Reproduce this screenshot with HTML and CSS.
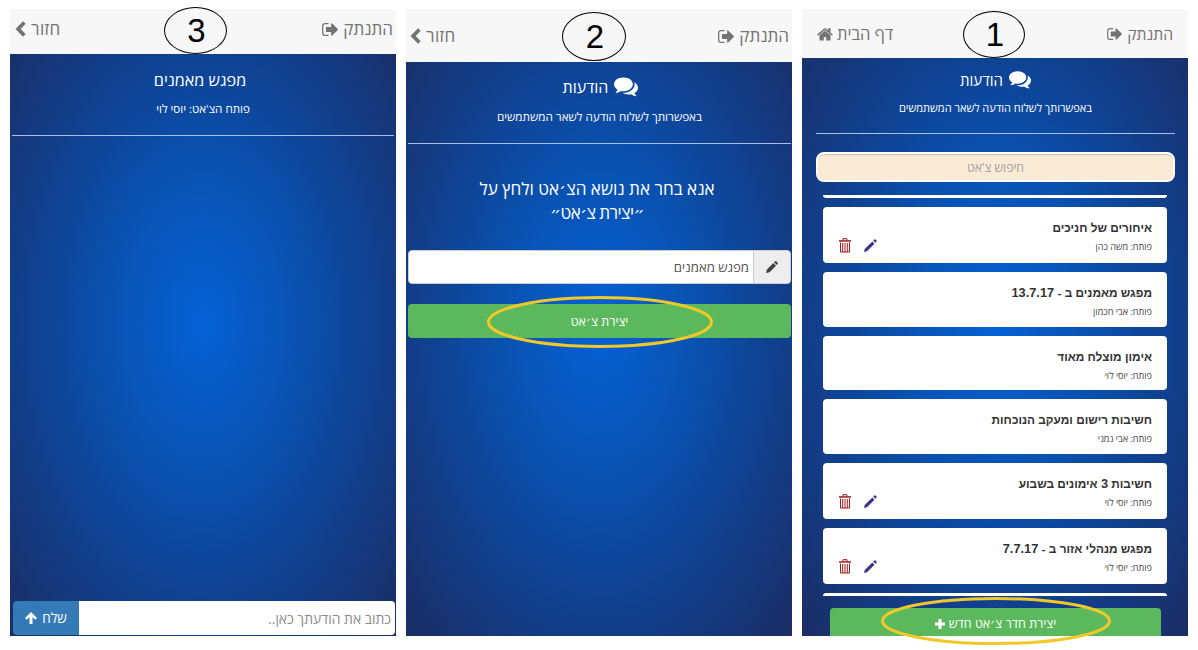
FILE: index.html
```
<!DOCTYPE html>
<html lang="he">
<head>
<meta charset="utf-8">
<title>צ'אט</title>
<link rel="stylesheet" href="styles.css">
</head>
<body>
<svg class="defs" width="0" height="0">
<symbol id="comments" viewBox="0 0 1792 1792"><path d="M1408 768q0 139-94 257t-256.5 186.5-353.5 68.5q-86 0-176-16-124 88-278 128-36 9-86 16h-3q-11 0-20.5-8t-11.5-21q-1-3-1-6.5t.5-6.5 2-6l2.5-5 3.5-5.5 4-5 4.5-5 4-4.5q5-6 23-25t26-29.5 22.5-29 25-38.5 20.5-44q-124-72-195-177t-71-224q0-139 94-257t256.5-186.5 353.5-68.5 353.5 68.5 256.5 186.5 94 257zm384 256q0 120-71 224.5t-195 176.5q10 24 20.5 44t25 38.5 22.5 29 26 29.5 23 25q1 1 4 4.5t4.5 5 4 5 3.5 5.5l2.5 5 2 6 .5 6.5-1 6.5q-3 14-13 22t-22 7q-50-7-86-16-154-40-278-128-90 16-176 16-271 0-472-132 58 4 88 4 161 0 309-45t264-129q125-92 192-212t67-254q0-77-23-152 129 71 204 178t75 230z"/></symbol>
<symbol id="home" viewBox="64 230 1664 1340"><path d="M1472 992v480q0 26-19 45t-45 19h-384v-384h-256v384h-384q-26 0-45-19t-19-45v-480q0-1 .5-3t.5-3l575-474 575 474q1 2 1 6zm223-69l-62 74q-8 9-21 11h-3q-13 0-21-7l-692-577-692 577q-12 8-24 7-13-2-21-11l-62-74q-8-10-7-23.5t11-21.5l719-599q32-26 76-26t76 26l244 204v-195q0-14 9-23t23-9h192q14 0 23 9t9 23v408l219 182q10 8 11 21.5t-7 23.5z"/></symbol>
<symbol id="signout" viewBox="64 256 1568 1280"><path d="M704 1440q0 4 1 20t.5 26.5-3 23.5-10 19.5-20.5 6.5h-320q-119 0-203.5-84.5t-84.5-203.5v-704q0-119 84.5-203.5t203.5-84.5h320q13 0 22.5 9.5t9.5 22.5q0 4 1 20t.5 26.5-3 23.5-10 19.5-20.5 6.5h-320q-66 0-113 47t-47 113v704q0 66 47 113t113 47h312l11.5 1 11.5 3 8 5.5 7 9 2 13.5zm928-544q0 26-19 45l-544 544q-19 19-45 19t-45-19-19-45v-288h-448q-26 0-45-19t-19-45v-384q0-26 19-45t45-19h448v-288q0-26 19-45t45-19 45 19l544 544q19 19 19 45z"/></symbol>
<symbol id="back" viewBox="0 0 11 16"><path d="M8 0.300 10.700 2.800 5.600 8l5.100 5.200L8 15.700.5 8z"/></symbol>
<symbol id="pencil" viewBox="0 0 14 14"><path d="M0 14l1-4.200L8.600 2.200l3.200 3.200L4.200 13zM9.400 1.400l1-1q.8-.7 1.600 0l1.600 1.600q.7.800 0 1.600l-1 1z"/></symbol>
<symbol id="thin-pencil" viewBox="0 0 14 14"><path d="M0 14l.8-3.200L9 2.700l2.300 2.300L3.200 13.200zM9.900 1.800l1.200-1.200q.6-.6 1.200 0l1.100 1.100q.6.600 0 1.200l-1.200 1.200z"/></symbol>
<symbol id="trash" viewBox="0 0 12 15"><path fill="none" stroke="currentColor" d="M4 2.500V.7h4v1.800M1.500 4.500V14h9V4.500M3.700 5v9M6 5v9M8.300 5v9"/><path d="M0 2.200h12v1.500H0z"/></symbol>
<symbol id="plus" viewBox="0 0 10 10"><path d="M3.500 0h3v3.500H10v3H6.500V10h-3V6.500H0v-3h3.500z"/></symbol>
<symbol id="up" viewBox="0 0 12 12"><path d="M6 0l6 6-1.700 1.700-2.800-2.700V12h-3V5L1.700 7.700 0 6z"/></symbol>
</svg>

<main class="screens">
  <section class="phone chat">
    <header class="bar">
      <a class="nav logout"><span>התנתק</span><svg><use href="#signout"/></svg></a>
      <a class="nav return"><span>חזור</span><svg><use href="#back"/></svg></a>
      <b class="step">3</b>
    </header>
    <div class="hero">
      <h1 class="room">מפגש מאמנים</h1>
      <p class="opener">פותח הצ'אט: יוסי לוי</p>
    </div>
    <div class="composer">
      <div class="message">כתוב את הודעתך כאן..</div>
      <div class="send"><span>שלח</span><svg><use href="#up"/></svg></div>
    </div>
  </section>

  <section class="phone create">
    <header class="bar">
      <a class="nav logout"><span>התנתק</span><svg><use href="#signout"/></svg></a>
      <a class="nav return"><span>חזור</span><svg><use href="#back"/></svg></a>
      <b class="step">2</b>
    </header>
    <div class="hero">
      <h1 class="heading"><svg><use href="#comments"/></svg><span>הודעות</span></h1>
      <p class="lead">באפשרותך לשלוח הודעה לשאר המשתמשים</p>
    </div>
    <p class="prompt"><span>אנא בחר את נושא הצ׳אט ולחץ על</span><span class="quoted">״יצירת צ׳אט״</span></p>
    <div class="field">
      <div class="addon"><svg><use href="#pencil"/></svg></div>
      <div class="value">מפגש מאמנים</div>
    </div>
    <div class="submit"><span>יצירת צ׳אט</span>
      <svg class="ring" viewBox="0 0 226 54"><ellipse cx="113" cy="27" rx="111.500" ry="24.500"/></svg>
    </div>
  </section>

  <section class="phone rooms">
    <header class="bar">
      <a class="nav logout"><span>התנתק</span><svg><use href="#signout"/></svg></a>
      <a class="nav main"><span>דף הבית</span><svg><use href="#home"/></svg></a>
      <b class="step">1</b>
    </header>
    <div class="hero">
      <h1 class="heading"><svg><use href="#comments"/></svg><span>הודעות</span></h1>
      <p class="lead">באפשרותך לשלוח הודעה לשאר המשתמשים</p>
    </div>
    <div class="search">חיפוש צ'אט</div>
    <div class="list">
      <div class="edge top"></div>
      <article class="card tall"><h2>איחורים של חניכים</h2><p>פותח: משה כהן</p><div class="tools"><svg class="edit"><use href="#thin-pencil"/></svg><svg class="remove"><use href="#trash"/></svg></div></article>
      <article class="card"><h2>מפגש מאמנים ב - <span class="num">13.7.17</span></h2><p>פותח: אבי חכמון</p></article>
      <article class="card"><h2>אימון מוצלח מאוד</h2><p>פותח: יוסי לוי</p></article>
      <article class="card"><h2>חשיבות רישום ומעקב הנוכחות</h2><p>פותח: אבי נמני</p></article>
      <article class="card tall"><h2>חשיבות <span class="num">3</span> אימונים בשבוע</h2><p>פותח: יוסי לוי</p><div class="tools"><svg class="edit"><use href="#thin-pencil"/></svg><svg class="remove"><use href="#trash"/></svg></div></article>
      <article class="card tall"><h2>מפגש מנהלי אזור ב - <span class="num">7.7.17</span></h2><p>פותח: יוסי לוי</p><div class="tools"><svg class="edit"><use href="#thin-pencil"/></svg><svg class="remove"><use href="#trash"/></svg></div></article>
      <div class="edge bottom"></div>
    </div>
    <div class="new"><span>יצירת חדר צ׳אט חדש</span><svg class="plus"><use href="#plus"/></svg>
      <svg class="ring" viewBox="0 0 230 50"><ellipse cx="115" cy="25" rx="113.500" ry="22.500"/></svg>
    </div>
  </section>
</main>
</body>
</html>
```
FILE: styles.css
```
* { box-sizing: border-box; }
body { margin: 0; background: #fff; font-family: "Open Sans", "DejaVu Sans", sans-serif; }
h1, h2, p { margin: 0; font-weight: 400; }
svg { fill: currentColor; flex: none; display: block; }
.defs { position: absolute; }
span, h2, p { white-space: nowrap; }

.screens { display: grid; grid-template-columns: repeat(3, 386px); gap: 10px; padding: 10px; height: 650px; }
.phone {
  direction: rtl; height: 626px; display: flex; flex-direction: column; color: #fff;
  background: radial-gradient(ellipse farthest-corner at 50% 50%, #0562d6 0%, #0a50ae 38%, #113f8c 66%, #1b2d64 100%);
}

.bar { position: relative; flex: none; display: flex; justify-content: space-between; align-items: center; background: #f7f7f7; color: #737373; border-top: 1px solid #f0f0f0; font-size: 17px; line-height: 24px; }
.nav { display: flex; align-items: center; gap: 5px; }
.logout svg { width: 16px; height: 13px; }
.return { letter-spacing: .4px; }
.return svg { width: 11px; height: 16px; }
.main svg { width: 16px; height: 13px; }
.step { position: absolute; display: flex; align-items: center; justify-content: center; padding-left: 2px; border: 1px solid #000; border-radius: 50%; color: #000; background: #f7f7f7; font: 400 33px/1 "Liberation Sans", sans-serif; }

.chat .bar { height: 44px; padding: 0 3px 7px 5px; }
.chat .step { left: 154px; top: -4px; width: 63px; height: 47px; }
.create .bar { height: 52px; padding: 0 3px 1px 4px; }
.create .step { left: 156px; top: 1px; width: 64px; height: 49px; }
.rooms .bar { height: 48px; padding: 0 15px 1px 15px; }
.rooms .logout { font-size: 15.700px; }
.rooms .logout svg { width: 15px; height: 12px; }
.rooms .main { font-size: 16.500px; gap: 4px; }
.rooms .step { left: 161px; top: 0; width: 62px; height: 47px; }

.hero { flex: none; display: flex; flex-direction: column; align-items: center; border-bottom: 1px solid #a9c0e4; }
.heading { display: flex; align-items: center; gap: 6px; font-size: 16px; line-height: 24px; }
.heading svg { width: 24px; height: 24px; margin-top: -3px; }

.chat .hero { height: 82px; margin: 0 2px; padding-top: 14px; }
.room { font-size: 16.200px; line-height: 24px; padding-left: 0; margin-right: 6px; }
.opener { font-size: 11.600px; line-height: 16px; margin-top: 9px; }
.create .hero { height: 82px; margin: 0 1px 0 2px; padding-top: 13px; }
.create .heading { margin-left: 2px; }
.create .lead { margin-top: 9px; font-size: 11.700px; line-height: 16px; }
.rooms .hero { height: 76px; margin: 0 13px 0 14px; padding-top: 10px; }
.rooms .heading { font-size: 15px; }
.rooms .heading svg { width: 22px; height: 22px; }
.rooms .lead { margin-top: 8px; font-size: 11px; line-height: 16px; }

.composer { margin: auto 1px 1px 3px; height: 34px; display: flex; }
.message { flex: 1; background: #fff; color: #8c8c8c; font-size: 13.900px; line-height: 36px; padding-right: 4px; border-radius: 0 4px 4px 0; }
.send { width: 66px; display: flex; align-items: center; justify-content: center; gap: 5px; background: #337ab7; border-radius: 4px 0 0 4px; font-size: 13.500px; }
.send svg { width: 12px; height: 12px; }

.prompt { display: flex; flex-direction: column; align-items: center; margin: 33px 4px 0 0; font-size: 17.100px; line-height: 24px; }
.quoted { letter-spacing: -.6px; }
.field { display: flex; height: 34px; margin: 25px 1px 0 2px; border: 1px solid #ccc; border-radius: 4px; background: #fff; overflow: hidden; }
.addon { width: 37px; display: flex; align-items: center; justify-content: center; background: #eee; color: #444; border-left: 1px solid #ccc; }
.addon svg { width: 12px; height: 12px; }
.value { color: #555; font-size: 13.200px; line-height: 33px; padding-right: 4px; }
.submit { position: relative; height: 34px; margin: 20px 1px 0 2px; display: flex; align-items: center; justify-content: center; background: #5cb85c; border-radius: 4px; font-size: 12.500px; }
.ring { position: absolute; fill: none; stroke: #f0c929; stroke-width: 3; }
.submit .ring { left: 79px; top: -9px; width: 226px; height: 54px; }

.search { height: 30px; margin: 18px 13px 0 14px; border: 2px solid #fff; border-radius: 8px; background: #faebd7; color: #a0a0a0; text-align: center; font-size: 12.200px; line-height: 27px; box-shadow: inset 0 1px 1px #c9bcac; }
.list { display: flex; flex-direction: column; gap: 9px; margin: 13px 21px 0; }
.edge { height: 3px; background: #fff; }
.edge.top { border-radius: 0 0 4px 4px; }
.edge.bottom { border-radius: 4px 4px 0 0; }
.card { position: relative; height: 54.500px; background: #fff; border-radius: 4px; padding: 13px 15px 0; color: #333; }
.card.tall { height: 56px; }
.card h2 { font: 700 11.800px/17px "Liberation Sans", sans-serif; }
.num { font-size: 12.800px; line-height: 1; }
.card p { font-size: 9.100px; line-height: 12px; margin-top: 4px; color: #444; }
.tools { position: absolute; left: 16px; bottom: 10px; display: flex; gap: 13px; align-items: center; }
.edit { width: 13px; height: 13px; color: #3c3480; }
.remove { width: 12px; height: 15px; color: #9c1c1c; }
.new { position: relative; height: 28px; margin: auto 27px 0 28px; display: flex; align-items: center; justify-content: center; gap: 4px; padding-top: 3px; background: #5cb85c; border-radius: 4px 4px 0 0; font-size: 12.500px; }
.plus { width: 10px; height: 10px; }
.new .ring { left: 51px; top: -12px; width: 230px; height: 50px; }
```
